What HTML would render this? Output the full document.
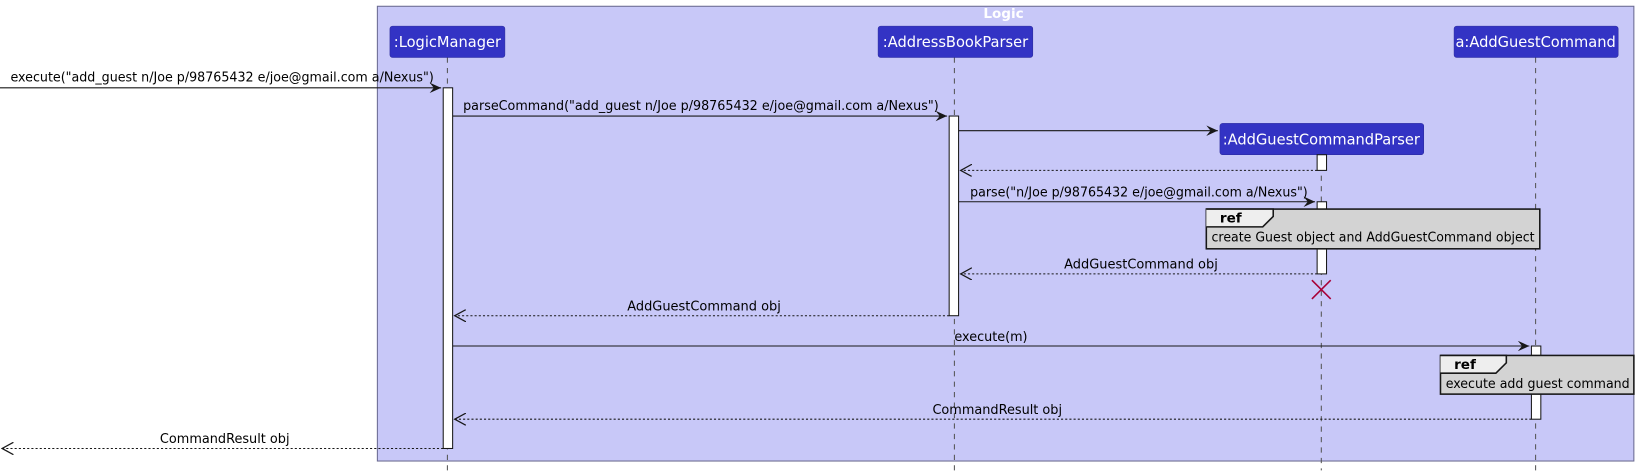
<!DOCTYPE html>
<html><head><meta charset="utf-8"><style>
html,body{margin:0;padding:0;background:#fff;}
svg{display:block;}
text{font-family:"DejaVu Sans","Liberation Sans",sans-serif;font-size:13px;fill:#000;}
.pt{fill:#fff;font-size:14px;}
</style></head><body>
<svg width="1637" height="472" viewBox="0 0 1566 451.5" preserveAspectRatio="none" xmlns="http://www.w3.org/2000/svg">
<defs>
<marker id="a" markerWidth="12" markerHeight="10" refX="11" refY="5" orient="auto" markerUnits="userSpaceOnUse">
<path d="M0,0 L11,5 L0,10 L4,5 Z" fill="#181818"/>
</marker>
<marker id="o" markerWidth="12" markerHeight="12" refX="11" refY="6" orient="auto" markerUnits="userSpaceOnUse">
<path d="M0,0 L11,6 L0,12" fill="none" stroke="#181818" stroke-width="1.2"/>
</marker>
</defs>
<rect x="361" y="6" width="1202" height="435" fill="#C8C8F8" stroke="#6A6A90" stroke-width="1"/>
<text x="960" y="17" text-anchor="middle" style="fill:#fff;font-weight:bold;font-size:13px">Logic</text>
<g stroke="#555" stroke-width="1" stroke-dasharray="5,5">
<line x1="428" y1="55" x2="428" y2="450"/>
<line x1="913" y1="55" x2="913" y2="450"/>
<line x1="1264" y1="148" x2="1264" y2="450"/>
<line x1="1469" y1="55" x2="1469" y2="450"/>
</g>
<g fill="#3333C4" stroke="#2a2a9a" stroke-width="0.5">
<rect x="373" y="25" width="110" height="30" rx="2.5"/>
<rect x="840" y="25" width="148" height="30" rx="2.5"/>
<rect x="1391" y="25" width="157" height="30" rx="2.5"/>
<rect x="1167" y="118" width="195" height="30" rx="2.5"/>
</g>
<text class="pt" x="428" y="45" text-anchor="middle">:LogicManager</text>
<text class="pt" x="914" y="45" text-anchor="middle">:AddressBookParser</text>
<text class="pt" x="1469" y="45" text-anchor="middle">a:AddGuestCommand</text>
<text class="pt" x="1264" y="138" text-anchor="middle">:AddGuestCommandParser</text>
<g fill="#fff" stroke="#181818" stroke-width="1">
<rect x="424" y="84" width="9" height="345"/>
<rect x="908" y="111" width="9" height="191"/>
<rect x="1260" y="148" width="9" height="15"/>
<rect x="1260" y="193" width="9" height="69"/>
<rect x="1465" y="331" width="9" height="70"/>
</g>
<g stroke="#181818" stroke-width="1" fill="none">
<line x1="0" y1="84" x2="422" y2="84" marker-end="url(#a)"/>
<line x1="433" y1="111" x2="906" y2="111" marker-end="url(#a)"/>
<line x1="917" y1="125" x2="1165" y2="125" marker-end="url(#a)"/>
<line x1="1260" y1="163" x2="919" y2="163" stroke-dasharray="2,2" marker-end="url(#o)"/>
<line x1="917" y1="193" x2="1258" y2="193" marker-end="url(#a)"/>
<line x1="1260" y1="262" x2="919" y2="262" stroke-dasharray="2,2" marker-end="url(#o)"/>
<line x1="908" y1="302" x2="435" y2="302" stroke-dasharray="2,2" marker-end="url(#o)"/>
<line x1="433" y1="331" x2="1463" y2="331" marker-end="url(#a)"/>
<line x1="1465" y1="401" x2="435" y2="401" stroke-dasharray="2,2" marker-end="url(#o)"/>
<line x1="424" y1="429" x2="2" y2="429" stroke-dasharray="2,2" marker-end="url(#o)"/>
</g>
<text x="10" y="78" textLength="405" lengthAdjust="spacingAndGlyphs">execute("add_guest n/Joe p/98765432 e/joe@gmail.com a/Nexus")</text>
<text x="443" y="105" textLength="455" lengthAdjust="spacingAndGlyphs">parseCommand("add_guest n/Joe p/98765432 e/joe@gmail.com a/Nexus")</text>
<text x="928" y="188" textLength="323" lengthAdjust="spacingAndGlyphs">parse("n/Joe p/98765432 e/joe@gmail.com a/Nexus")</text>
<text x="1018" y="257" textLength="147" lengthAdjust="spacingAndGlyphs">AddGuestCommand obj</text>
<text x="600" y="297" textLength="147" lengthAdjust="spacingAndGlyphs">AddGuestCommand obj</text>
<text x="913" y="326" textLength="70" lengthAdjust="spacingAndGlyphs">execute(m)</text>
<text x="892" y="396" textLength="124" lengthAdjust="spacingAndGlyphs">CommandResult obj</text>
<text x="153" y="424" textLength="124" lengthAdjust="spacingAndGlyphs">CommandResult obj</text>
<g stroke="#A80036" stroke-width="1.5">
<line x1="1255" y1="268" x2="1273" y2="286"/>
<line x1="1273" y1="268" x2="1255" y2="286"/>
</g>
<rect x="1154" y="200" width="319" height="38" fill="#D3D3D3" stroke="#181818" stroke-width="1.5"/>
<path d="M1154,200 L1218,200 L1218,207 L1208,217 L1154,217" fill="#EEEEEE" stroke="#181818" stroke-width="1.5"/>
<text x="1167" y="213" style="font-weight:bold">ref</text>
<text x="1159" y="231" textLength="309" lengthAdjust="spacingAndGlyphs">create Guest object and AddGuestCommand object</text>
<rect x="1378" y="340" width="185" height="37" fill="#D3D3D3" stroke="#181818" stroke-width="1.5"/>
<path d="M1378,340 L1441,340 L1441,347 L1431,357 L1378,357" fill="#EEEEEE" stroke="#181818" stroke-width="1.5"/>
<text x="1391" y="353" style="font-weight:bold">ref</text>
<text x="1383" y="371" textLength="176" lengthAdjust="spacingAndGlyphs">execute add guest command</text>
</svg>
</body></html>
